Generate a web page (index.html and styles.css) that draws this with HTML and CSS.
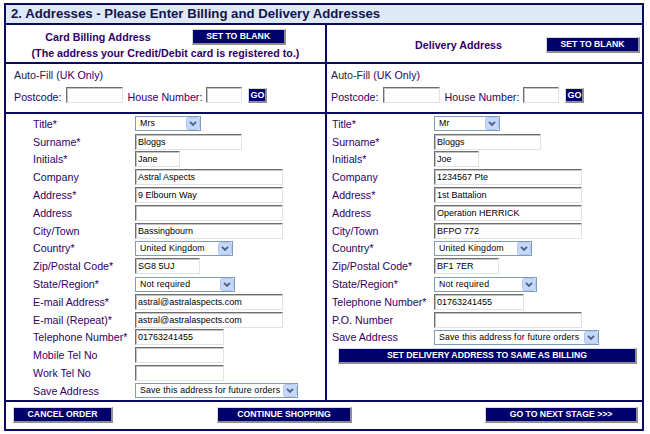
FILE: index.html
```html
<!DOCTYPE html>
<html>
<head>
<meta charset="utf-8">
<title>Addresses</title>
<link rel="stylesheet" href="styles.css">
</head>
<body>
<div class="panel">
  <div class="title">2. Addresses - Please Enter Billing and Delivery Addresses</div>
  <div class="grid">
    <!-- header row -->
    <div class="cell l head-l">
      <div class="line1">
        <span class="htext">Card Billing Address</span>
        <button class="btn w94">SET TO BLANK</button>
      </div>
      <div class="htext line2">(The address your Credit/Debit card is registered to.)</div>
    </div>
    <div class="cell head-r">
      <span class="htext">Delivery Address</span>
      <button class="btn w94">SET TO BLANK</button>
    </div>

    <!-- auto-fill row -->
    <div class="cell l autofill af-l">
      <div class="af-title"><span class="af-strong">Auto-Fill</span> (UK Only)</div>
      <div class="af-row">
        <span class="lbl">Postcode:</span>
        <input class="inp w57" type="text">
        <span class="lbl hn">House Number:</span>
        <input class="inp w36" type="text">
        <button class="btn go">GO</button>
      </div>
    </div>
    <div class="cell autofill af-r">
      <div class="af-title"><span class="af-strong">Auto-Fill</span> (UK Only)</div>
      <div class="af-row">
        <span class="lbl">Postcode:</span>
        <input class="inp w57" type="text">
        <span class="lbl hn">House Number:</span>
        <input class="inp w36" type="text">
        <button class="btn go">GO</button>
      </div>
    </div>

    <!-- fields row -->
    <div class="cell l">
      <div class="fields f-l">
        <span class="lbl">Title*</span>
        <span class="sel w66"><select><option>Mrs</option></select><svg class="arr" viewBox="0 0 14 13" width="14" height="13"><rect x="0.5" y="0.5" width="13" height="12" rx="2" fill="#c6d7fc" stroke="#b3c6f0"/><path d="M4 4.8 L7 7.8 L10 4.8" fill="none" stroke="#4d6185" stroke-width="1.9"/></svg></span>
        <span class="lbl">Surname*</span>
        <input class="inp w107" type="text" value="Bloggs">
        <span class="lbl">Initials*</span>
        <input class="inp w45" type="text" value="Jane">
        <span class="lbl">Company</span>
        <input class="inp w148" type="text" value="Astral Aspects">
        <span class="lbl">Address*</span>
        <input class="inp w148" type="text" value="9 Elbourn Way">
        <span class="lbl">Address</span>
        <input class="inp w148" type="text" value="">
        <span class="lbl">City/Town</span>
        <input class="inp w148" type="text" value="Bassingbourn">
        <span class="lbl">Country*</span>
        <span class="sel w98"><select><option>United Kingdom</option></select><svg class="arr" viewBox="0 0 14 13" width="14" height="13"><rect x="0.5" y="0.5" width="13" height="12" rx="2" fill="#c6d7fc" stroke="#b3c6f0"/><path d="M4 4.8 L7 7.8 L10 4.8" fill="none" stroke="#4d6185" stroke-width="1.9"/></svg></span>
        <span class="lbl">Zip/Postal Code*</span>
        <input class="inp w65" type="text" value="SG8 5UJ">
        <span class="lbl">State/Region*</span>
        <span class="sel w100"><select><option>Not required</option></select><svg class="arr" viewBox="0 0 14 13" width="14" height="13"><rect x="0.5" y="0.5" width="13" height="12" rx="2" fill="#c6d7fc" stroke="#b3c6f0"/><path d="M4 4.8 L7 7.8 L10 4.8" fill="none" stroke="#4d6185" stroke-width="1.9"/></svg></span>
        <span class="lbl">E-mail Address*</span>
        <input class="inp w148" type="text" value="astral@astralaspects.com">
        <span class="lbl">E-mail (Repeat)*</span>
        <input class="inp w148" type="text" value="astral@astralaspects.com">
        <span class="lbl">Telephone Number*</span>
        <input class="inp w89" type="text" value="01763241455">
        <span class="lbl">Mobile Tel No</span>
        <input class="inp w89" type="text" value="">
        <span class="lbl">Work Tel No</span>
        <input class="inp w89" type="text" value="">
        <span class="lbl">Save Address</span>
        <span class="sel w163"><select><option>Save this address for future orders</option></select><svg class="arr" viewBox="0 0 14 13" width="14" height="13"><rect x="0.5" y="0.5" width="13" height="12" rx="2" fill="#c6d7fc" stroke="#b3c6f0"/><path d="M4 4.8 L7 7.8 L10 4.8" fill="none" stroke="#4d6185" stroke-width="1.9"/></svg></span>
      </div>
    </div>
    <div class="cell">
      <div class="fields f-r">
        <span class="lbl">Title*</span>
        <span class="sel w66"><select><option>Mr</option></select><svg class="arr" viewBox="0 0 14 13" width="14" height="13"><rect x="0.5" y="0.5" width="13" height="12" rx="2" fill="#c6d7fc" stroke="#b3c6f0"/><path d="M4 4.8 L7 7.8 L10 4.8" fill="none" stroke="#4d6185" stroke-width="1.9"/></svg></span>
        <span class="lbl">Surname*</span>
        <input class="inp w107" type="text" value="Bloggs">
        <span class="lbl">Initials*</span>
        <input class="inp w45" type="text" value="Joe">
        <span class="lbl">Company</span>
        <input class="inp w148" type="text" value="1234567 Pte">
        <span class="lbl">Address*</span>
        <input class="inp w148" type="text" value="1st Battalion">
        <span class="lbl">Address</span>
        <input class="inp w148" type="text" value="Operation HERRICK">
        <span class="lbl">City/Town</span>
        <input class="inp w148" type="text" value="BFPO 772">
        <span class="lbl">Country*</span>
        <span class="sel w98"><select><option>United Kingdom</option></select><svg class="arr" viewBox="0 0 14 13" width="14" height="13"><rect x="0.5" y="0.5" width="13" height="12" rx="2" fill="#c6d7fc" stroke="#b3c6f0"/><path d="M4 4.8 L7 7.8 L10 4.8" fill="none" stroke="#4d6185" stroke-width="1.9"/></svg></span>
        <span class="lbl">Zip/Postal Code*</span>
        <input class="inp w65" type="text" value="BF1 7ER">
        <span class="lbl">State/Region*</span>
        <span class="sel w103"><select><option>Not required</option></select><svg class="arr" viewBox="0 0 14 13" width="14" height="13"><rect x="0.5" y="0.5" width="13" height="12" rx="2" fill="#c6d7fc" stroke="#b3c6f0"/><path d="M4 4.8 L7 7.8 L10 4.8" fill="none" stroke="#4d6185" stroke-width="1.9"/></svg></span>
        <span class="lbl">Telephone Number*</span>
        <input class="inp w90" type="text" value="01763241455">
        <span class="lbl">P.O. Number</span>
        <input class="inp w148" type="text" value="">
        <span class="lbl">Save Address</span>
        <span class="sel w165"><select><option>Save this address for future orders</option></select><svg class="arr" viewBox="0 0 14 13" width="14" height="13"><rect x="0.5" y="0.5" width="13" height="12" rx="2" fill="#c6d7fc" stroke="#b3c6f0"/><path d="M4 4.8 L7 7.8 L10 4.8" fill="none" stroke="#4d6185" stroke-width="1.9"/></svg></span>
      </div>
      <button class="btn same w299">SET DELIVERY ADDRESS TO SAME AS BILLING</button>
    </div>
  </div>
  <div class="actions">
    <button class="btn w100">CANCEL ORDER</button>
    <button class="btn w135 cont">CONTINUE SHOPPING</button>
    <button class="btn w153 next">GO TO NEXT STAGE &gt;&gt;&gt;</button>
  </div>
</div>
</body>
</html>
```

FILE: styles.css
```css
* { box-sizing: border-box; }

body {
  margin: 0;
  background: #ffffff;
  font-family: "Liberation Sans", Arial, sans-serif;
}

.panel {
  margin: 3px 0 0 4px;
  width: 640px;
  height: 428px;
  border: 2px solid #0b0b5e;
  display: flex;
  flex-direction: column;
}

.title {
  height: 20px;
  flex: none;
  border-bottom: 2px solid #0b0b5e;
  background: #dde9f9;
  color: #14144a;
  font-weight: bold;
  font-size: 13.2px;
  line-height: 18px;
  padding-left: 5px;
  white-space: nowrap;
}

.grid {
  display: grid;
  grid-template-columns: 321px 315px;
  grid-template-rows: 39px 50px 288px;
  flex: none;
}

.cell {
  border-bottom: 2px solid #0b0b5e;
}

.cell.l {
  border-right: 2px solid #0b0b5e;
}

/* header row */
.htext {
  font-weight: bold;
  font-size: 10.7px;
  color: #330066;
  white-space: nowrap;
}

.head-l {
  display: flex;
  flex-direction: column;
  align-items: center;
  padding-top: 4px;
}

.line1 {
  display: flex;
  align-items: center;
  gap: 41px;
  height: 16px;
}

.line2 {
  margin-top: 1px;
  line-height: 14px;
}

.head-r {
  display: flex;
  align-items: center;
  justify-content: flex-end;
  gap: 44px;
  padding: 2px 2px 0 0;
}

/* buttons */
.btn {
  display: block;
  height: 16px;
  padding: 0;
  margin: 0;
  background: #00006b;
  color: #ffffff;
  font-family: "Liberation Sans", Arial, sans-serif;
  font-weight: bold;
  font-size: 8.7px;
  line-height: 13px;
  text-align: center;
  white-space: nowrap;
  border-style: solid;
  border-width: 1px 2px 2px 1px;
  border-color: #d8d8e0 #8e8e8e #8e8e8e #d8d8e0;
  border-radius: 0;
}

.go {
  width: 19px;
  height: 15px;
  line-height: 12px;
  font-size: 9px;
  margin-left: 6px;
}

.w94 { width: 94px; }
.w100 { width: 100px; }
.w135 { width: 135px; }
.w153 { width: 153px; }
.w299 { width: 299px; }

/* auto fill */
.autofill {
  padding-top: 4px;
}

.af-l { padding-left: 8px; }
.af-r { padding-left: 4px; }

.af-title {
  font-size: 10.7px;
  line-height: 14px;
  color: #330066;
}

.af-strong {
  color: #1e1e48;
}

.af-row {
  display: flex;
  align-items: center;
  height: 16px;
  margin-top: 5px;
}

.af-row .lbl {
  padding-top: 3px;
  margin-right: 4px;
}

.af-row .hn {
  margin-left: 5px;
}

/* labels and inputs */
.lbl {
  font-size: 10.7px;
  color: #330066;
  white-space: nowrap;
}

.inp {
  display: block;
  height: 16px;
  margin: 0;
  padding: 0 0 0 2px;
  background: #ffffff;
  font-family: "Liberation Sans", Arial, sans-serif;
  font-size: 9px;
  color: #000000;
  border-style: solid;
  border-width: 1px;
  border-color: #6e6e6e #e2e2e2 #e2e2e2 #6e6e6e;
  box-shadow: inset 1px 1px 0 #c4c4c4;
  outline: none;
}

.sel {
  position: relative;
  display: block;
  height: 15px;
}

.sel select {
  appearance: none;
  -webkit-appearance: none;
  display: block;
  width: 100%;
  height: 15px;
  margin: 0;
  padding: 0 0 0 4px;
  border: 1px solid #7f9db9;
  border-radius: 0;
  background: #ffffff;
  font-family: "Liberation Sans", Arial, sans-serif;
  font-size: 8.8px;
  letter-spacing: 0.15px;
  color: #000000;
  line-height: 13px;
}

.sel .arr {
  position: absolute;
  right: 1px;
  top: 1px;
  pointer-events: none;
}

.w36 { width: 36px; }
.w45 { width: 45px; }
.w57 { width: 57px; }
.w65 { width: 65px; }
.w66 { width: 66px; }
.w89 { width: 89px; }
.w90 { width: 90px; }
.w98 { width: 98px; }
.w103 { width: 103px; }
.w107 { width: 107px; }
.w148 { width: 148px; }
.w163 { width: 163px; }
.w165 { width: 165px; }

.fields {
  display: grid;
  grid-template-columns: 102px auto;
  grid-auto-rows: 17.8px;
  align-items: center;
  justify-items: start;
  padding-top: 1px;
}

.f-l { margin-left: 27px; }
.f-r { margin-left: 5px; }

.same {
  margin: 2px 0 0 11px;
}

/* bottom actions */
.actions {
  flex: none;
  height: 27px;
  display: flex;
  align-items: flex-start;
  padding: 5px 4px 0 7px;
}

.cont { margin-left: 104px; }
.next { margin-left: auto; }
```
